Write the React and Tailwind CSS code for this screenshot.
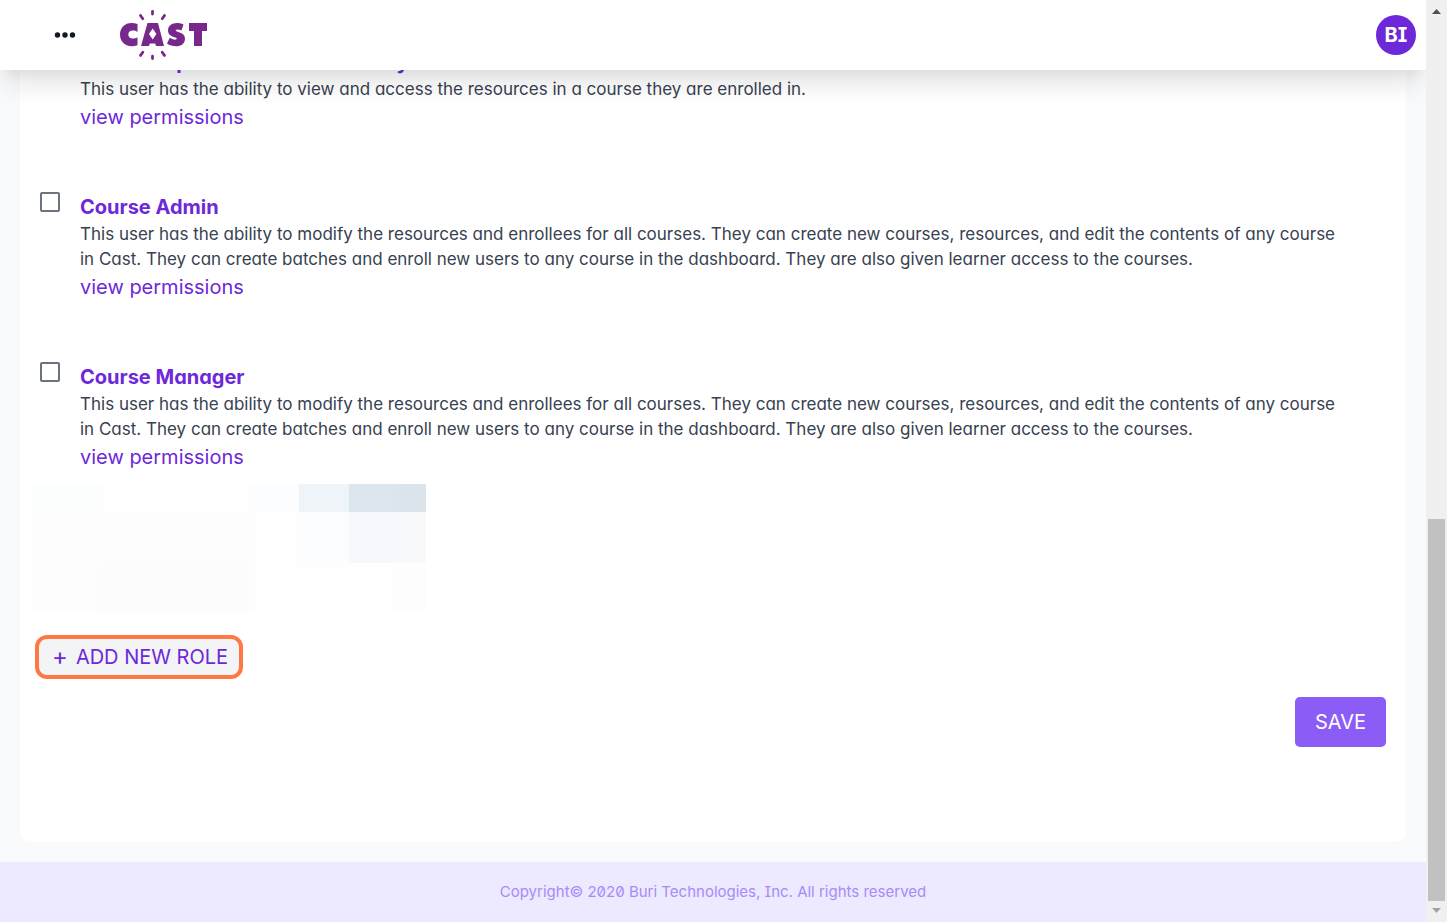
import React from 'react';

const COURSE_TEXT =
  'This user has the ability to modify the resources and enrollees for all courses. They can create new courses, resources, and edit the contents of any course in Cast. They can create batches and enroll new users to any course in the dashboard. They are also given learner access to the courses.';

const roles = [
  {
    id: 'viewer',
    name: 'Content Specific Role - View Only',
    text: 'This user has the ability to view and access the resources in a course they are enrolled in.',
  },
  { id: 'admin', name: 'Course Admin', text: COURSE_TEXT },
  { id: 'manager', name: 'Course Manager', text: COURSE_TEXT },
];

// Redacted custom role, shown as coarse blocks
const blocks = [
  'bg-[#fcfefd]', 'bg-[#fefefe]', 'bg-[#fcfdfe]', 'bg-[#eff4f8]', 'bg-[#dce6ef]', 'bg-[#dbe3eb]',
  'bg-[#fdfdfd]', 'bg-[#fdfdfd]', 'bg-[#fefefe]', 'bg-[#fcfdfe]', 'bg-[#f5f9fd]', 'bg-[#f8f9fb]',
  'bg-[#fcfdfc]', 'bg-[#fcfcfc]', 'bg-[#fefefe]', 'bg-[#fefefe]', 'bg-[#fefefe]', 'bg-[#fdfdfd]',
];

function Logo() {
  return (
    <svg width="88" height="50" viewBox="0 0 88 50" fill="none" role="img" aria-label="Cast">
      <path
        d="M32.500 1.500v2.500M20.500 5.500l2.300 3.200M44.500 5.500l-2.300 3.200M32.500 46.200v2.300M22.800 42.200l-2.300 3.200M42.200 42.200l2.300 3.200"
        stroke="#78278b"
        strokeWidth="2.800"
        strokeLinecap="round"
      />
      <g fill="#78278b">
        <path d="M17.500 14v8c-1.500-1-3-1.400-4.700-1.400C10.200 20.600 8.300 22 8.300 24.600s1.900 4 4.500 4c1.700 0 3.200-.4 4.700-1.400v8c-2 .8-4 1.100-6 1.100C4.700 36.300 0 31.300 0 24.600S4.700 13 11.500 13c2 0 4 .2 6 1z" />
        <path fillRule="evenodd" d="M27.500 13h10.500L44 36h-8l-.8-2.500h-5.400L29 36h-8zM32.700 18.500L29 24l3.700 5.500L36.400 24z" />
        <path d="M63.500 14.500l-2 6c-2-1.200-5-1.500-5.700-.5-.5 1 1.200 1.600 3.200 2.200 4 1.100 6 3.300 6 6.500 0 5-4 7.500-9 7.500-3.500 0-6.500-1-9-2.700l2.800-5.700c2.200 1.400 4.700 2.200 6.200 1.700 1.300-.5 1-1.500-.5-2-4.500-1.200-7.500-3-7.500-7 0-4.800 4-7.500 9-7.500 2.500 0 4.800.5 6.500 1.500z" />
        <path d="M69 13h18v8h-5v15h-8V21h-5z" />
      </g>
    </svg>
  );
}

function Header() {
  return (
    <header className="z-10 flex h-[70px] shrink-0 items-center bg-white pr-[10px] pl-[54px] shadow-[0_20px_25px_-5px_rgba(0,0,0,0.1),0_10px_10px_-5px_rgba(0,0,0,0.04)]">
      <button type="button" aria-label="Menu">
        <svg width="22" height="6" viewBox="0 0 22 6" fill="#111827">
          <circle cx="3.500" cy="3" r="2.700" />
          <circle cx="11" cy="3" r="2.700" />
          <circle cx="18.500" cy="3" r="2.700" />
        </svg>
      </button>
      <a href="#home" className="ml-11"><Logo /></a>
      <button type="button" className="ml-auto size-10 rounded-full bg-[#6d28d9] text-xl font-bold text-white">
        BI
      </button>
    </header>
  );
}

function Role({ role }) {
  return (
    <li className="flex gap-5">
      <input
        id={role.id}
        type="checkbox"
        className="size-5 shrink-0 appearance-none rounded-xs border-2 border-[#6b7280] bg-white checked:bg-[#6d28d9]"
      />
      <div>
        <label htmlFor={role.id} className="block text-xl leading-[30px] font-bold text-[#6d28d9]">{role.name}</label>
        <p className="pr-10 text-[17px] leading-[25px] text-[#374151]">{role.text}</p>
        <a href="#permissions" className="block text-xl leading-[30px] text-[#6d28d9]">view permissions</a>
      </div>
    </li>
  );
}

function Scrollbar() {
  return (
    <div className="flex w-[21px] shrink-0 flex-col items-center bg-[#f0f0f0]" aria-hidden="true">
      <svg width="21" height="21" viewBox="0 0 21 21" fill="#505050"><path d="M6 14l4.500-5 4.500 5z" /></svg>
      <div className="flex w-full flex-1 flex-col justify-end px-[2px]">
        <div className="h-[382px] bg-[#c1c1c1]" />
      </div>
      <svg width="21" height="21" viewBox="0 0 21 21" fill="#a3a3a3"><path d="M6 7l4.500 5L15 7z" /></svg>
    </div>
  );
}

export default function App() {
  return (
    <div className="flex h-screen overflow-hidden bg-slate-50 font-['Inter',sans-serif] [font-feature-settings:'cv08','cv11','zero']">
      <div className="flex min-w-0 flex-1 flex-col overflow-hidden">
        <Header />
        <div className="flex min-h-0 flex-1 flex-col justify-end overflow-hidden">
          <main className="p-5">
            <div className="rounded-[10px] bg-white px-5 pt-5 pb-[95px]">
              <ul className="flex flex-col gap-[60px]">
                {roles.map((role) => <Role key={role.id} role={role} />)}
              </ul>

              <div className="mt-3 -ml-2 grid w-[394px] grid-cols-[67px_150px_50px_50px_50px_27px] grid-rows-[28px_51px_49px]">
                {blocks.map((color, i) => <span key={i} className={color} />)}
              </div>

              <button
                type="button"
                className="mt-[23px] -ml-[5px] flex h-11 w-52 items-center gap-2 rounded-xl border-4 border-[#ff7844] bg-gray-100 pl-[13px] text-xl text-[#6d28d9]"
              >
                <span className="text-2xl leading-none">+</span>
                ADD NEW ROLE
              </button>

              <div className="mt-[18px] flex justify-end">
                <button type="button" className="h-[50px] rounded-[5px] bg-[#8b5cf6] px-5 text-xl text-white">
                  SAVE
                </button>
              </div>
            </div>
          </main>
          <footer className="flex h-[60px] shrink-0 items-center justify-center bg-[#ede9fe] text-[15px] text-[#a78bfa]">
            Copyright© 2020 Buri Technologies, Inc. All rights reserved
          </footer>
        </div>
      </div>
      <Scrollbar />
    </div>
  );
}
